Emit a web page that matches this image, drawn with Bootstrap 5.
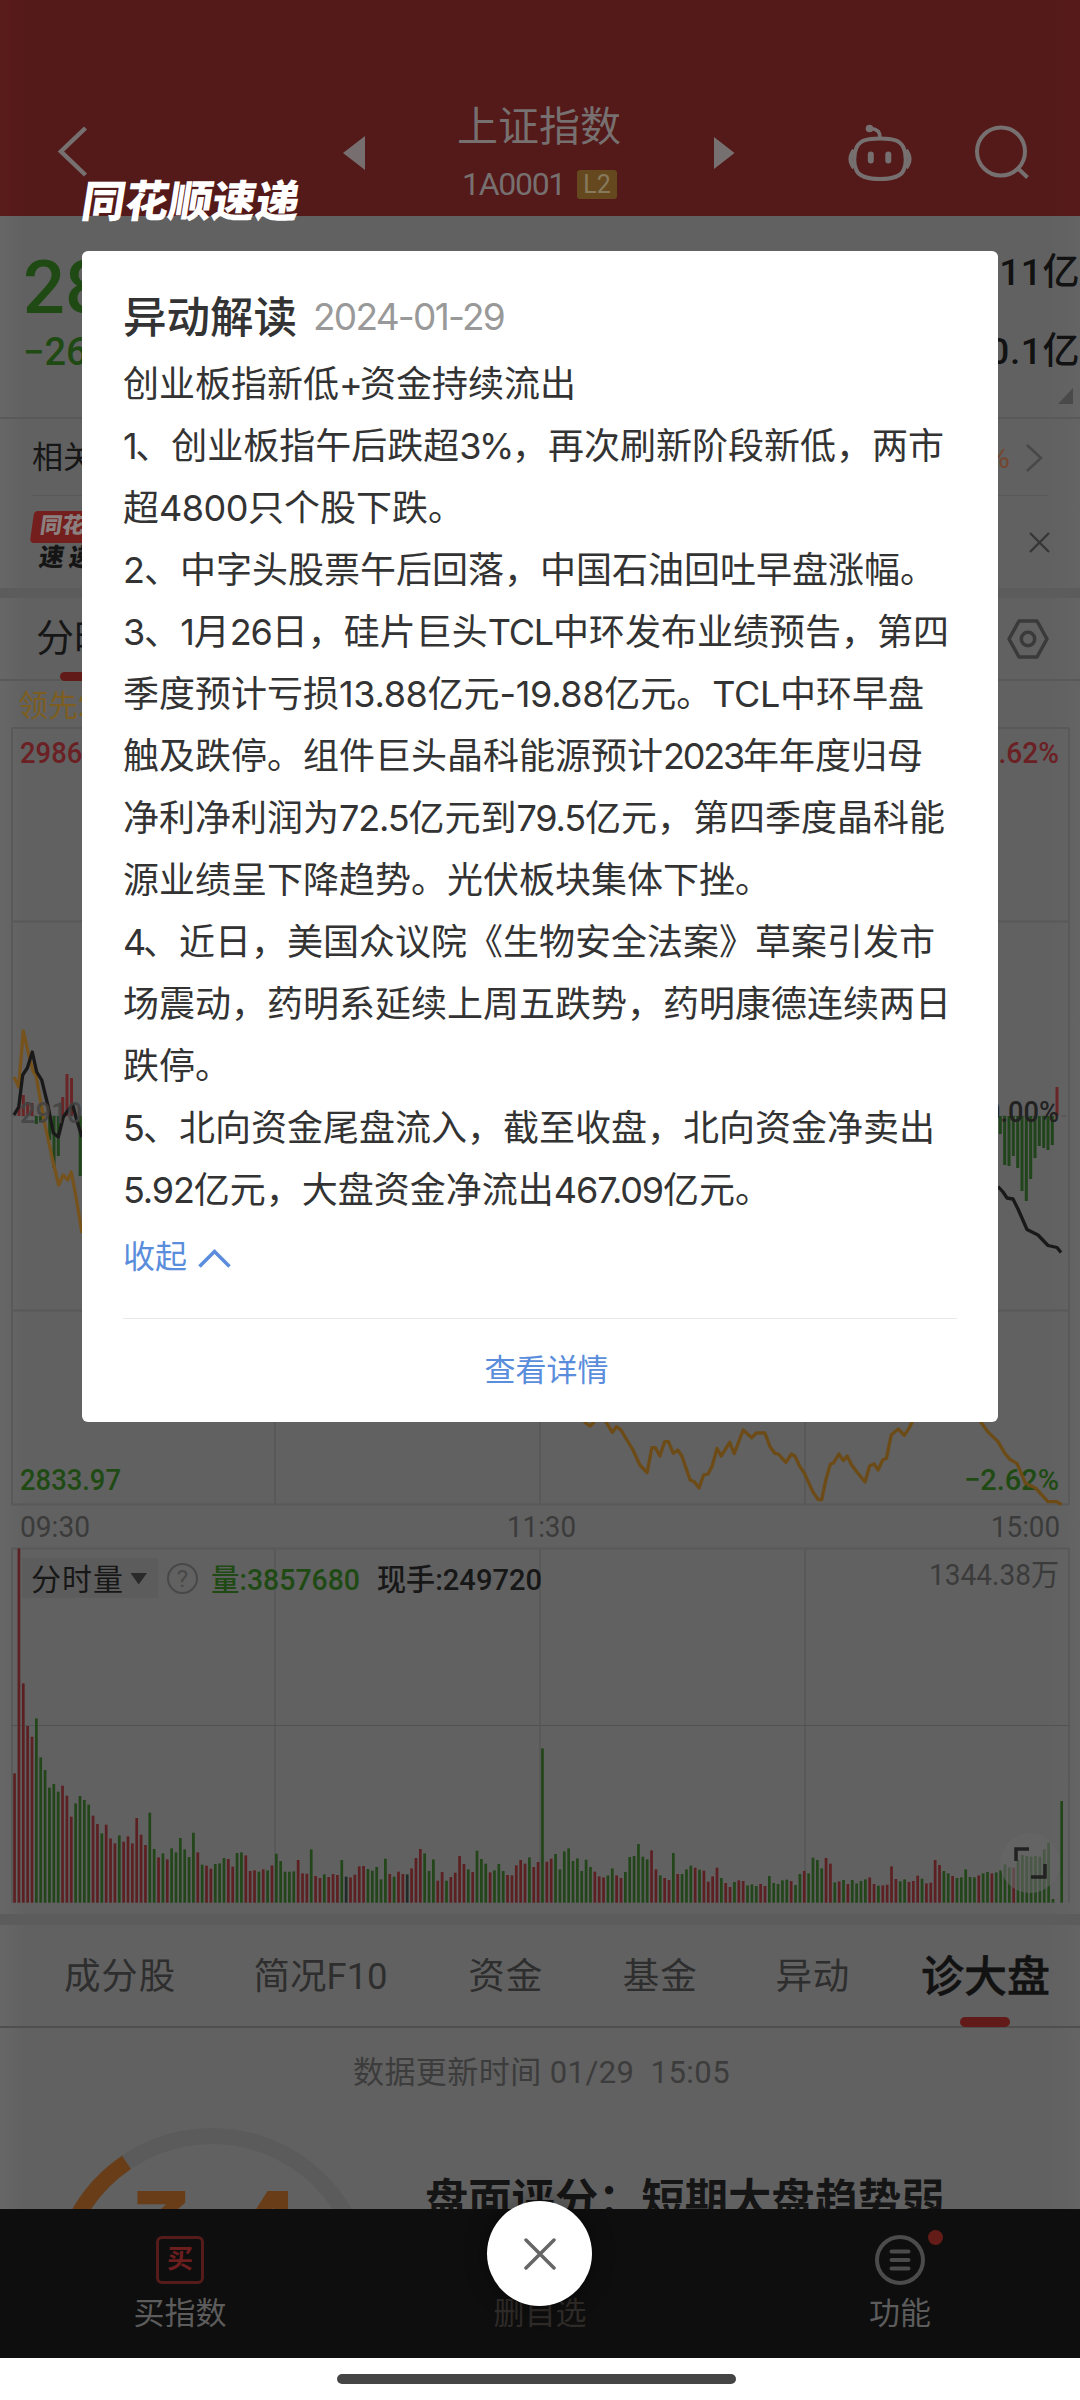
<!DOCTYPE html>
<html lang="zh-CN">
<head>
<meta charset="utf-8">
<meta name="viewport" content="width=device-width, initial-scale=1">
<title>上证指数 1A0001</title>
<link href="https://cdn.jsdelivr.net/npm/bootstrap@5.3.0/dist/css/bootstrap.min.css" rel="stylesheet">
<style>
  body{margin:0;background:#fff;font-family:Roboto,"Noto Sans CJK SC",sans-serif;color:#161616;}
  svg{display:block;flex:none}
  .phone{width:1080px;height:2400px;overflow:hidden;background:linear-gradient(90deg,#676767 0,#616161 24px,#616161 1050px,#646464 1080px)}
  .phone *{white-space:nowrap}
  .topbar{height:216px;padding-top:92px;background:linear-gradient(90deg,#5b1b1b 0,#541919 24px,#541919 1050px,#571a1a 1080px);color:#777070}
  .topbar .titles{width:180px;margin-left:84px}
  .t-name{font-size:41px;line-height:62px;padding:4px 0 0 6px}
  .t-code{font-size:32px;line-height:36px;margin-top:8px;padding-left:11px}
  .l2{background:#66481f;color:#877a5c;font-size:25px;line-height:29px;width:40px;border-radius:3px;text-align:center;margin-left:12px}
  .quote{height:203px;border-bottom:2px solid #595959}
  .green{color:#1f4a14}
  .q-big{font-size:74px;font-weight:500;line-height:74px}
  .q-chg{font-size:38px;font-weight:500;line-height:40px;margin-top:7px}
  .q-side{font-size:37px;font-weight:500;line-height:40px;color:#121212;letter-spacing:.6px}
  .related{height:77px;margin:0 32px;border-bottom:1px solid #595959;font-size:31px;padding-top:2px}
  .news{height:92px;padding:0 30px 0 32px}
  .band{height:10px;background:#5c5c5c}
  .tabs1{height:83px;border-bottom:2px solid #595959;padding:0 31px 0 36px}
  .tab-a{font-size:38px;position:relative}
  .bar-red{position:absolute;height:9px;border-radius:5px;background:#611a17}
  .lead20{height:46px;padding-left:18px;font-size:30px;line-height:50px;color:#7d5e20}
  .tagtop{background:#741f1d;color:#8b8080;font-weight:900;font-size:22px;width:100px;height:32px;line-height:30px;transform:skewX(-8deg);padding-left:8px;border-radius:4px}
  .tagbot{font-weight:900;font-size:25px;line-height:30px;transform:skewX(-8deg);color:#151515;padding-left:7px;letter-spacing:5px}
  .band2{height:11px;background:#5c5c5c}
  .tabs2{height:103px;border-bottom:2px solid #4f4f4f;font-size:36.5px;color:#2e2e2e;padding:3px 30px 0 64px}
  .tabs2 .on{font-size:43px;font-weight:500;color:#121212;position:relative;-webkit-text-stroke:.5px #121212}
  .updated{font-size:31px;height:81px;line-height:90px;color:#3c3c3c;padding-left:353px}
  .score{height:100px;overflow:hidden}
  .score-txt{font-size:43.3px;font-weight:700;line-height:50px;color:#151515;margin-top:67px;margin-left:59px}
  .dock{height:149px;background:#0e0e0e;font-size:31px;color:#5c5c5c}
  .dock .slot{flex:1 1 0}
  .dock-label{line-height:40px}
  .buy{width:48px;height:48px;border:3px solid #551b1b;border-radius:6px;color:#6c1e1e;font-size:26px;font-weight:700;line-height:41px;text-align:center}
  .homebar{height:42px;background:#fff}
  .homebar i{width:399px;height:10px;border-radius:5px;background:#454545;margin:16px 7px 0 0}
  .logo{position:absolute;left:82px;top:176px;color:#fff;font-size:43.5px;font-weight:900;line-height:54px;transform:skewX(-9deg)}
  .sheet{position:absolute;left:82px;top:251px;width:916px;height:1171px;background:#fff;border-radius:6px;padding:36px 41px 0 41px;color:#333;font-family:Inter,"Noto Sans CJK SC",sans-serif}
  .s-title{font-size:43.5px;font-weight:500;line-height:60px}
  .s-date{font-size:37px;color:#999;line-height:60px;margin-left:16px}
  .para{font-size:36px;line-height:62px;height:62px}
  .linkblue{color:#5a8ddb}
  .fold{font-size:32px;line-height:50px;margin-top:11px}
  .rule{height:1px;background:#e8e8e8;margin-top:36px}
  .more{font-size:31px;line-height:50px;margin-top:26px;padding-left:13px}
  .fab{position:absolute;left:487px;top:2201px;width:105px;height:105px;border-radius:50%;background:#fff;box-shadow:0 0 22px rgba(0,0,0,.4)}
</style>
<script src="https://cdn.jsdelivr.net/npm/bootstrap@5.3.0/dist/js/bootstrap.bundle.min.js"></script>
</head>
<body>
<div class="phone position-relative d-flex flex-column">
  <header class="topbar d-flex flex-shrink-0">
    <svg width="367" height="90" viewBox="0 92 367 90"><path d="M85.5 128 61 151.500 85.500 175" fill="none" stroke="#777070" stroke-width="4.500"/><path d="M343 153 365 136V170Z" fill="#776f6f"/></svg>
    <div class="titles">
      <div class="t-name">上证指数</div>
      <div class="t-code d-flex align-items-center"><span data-w="103">1A0001</span><span class="l2 d-inline-block">L2</span></div>
    </div>
    <svg width="449" height="90" viewBox="631 92 449 90" fill="none" stroke="#777070" stroke-width="4">
      <path d="M714 137 734.500 153 714 169Z" fill="#777070" stroke="none"/>
      <path d="M880 138.500c14 0 20 2 23.500 9 3 7 3 17 0 23-3 6-10 8.500-23.500 8.500s-20.500-2.500-23.500-8.500c-3-6-3-16 0-23 3.500-7 9.500-9 23.500-9Z"/>
      <path d="M854 150q-7 9 0 18M906 150q7 9 0 18" stroke-width="4"/>
      <path d="M880 137c0-5-3-8-9-8.500" stroke-width="3.500"/><circle cx="869.500" cy="128.500" r="3.800" fill="#777070" stroke="none"/>
      <path d="M870.800 154.500v6M888.300 154.500v6" stroke-width="6" stroke-linecap="round"/>
      <circle cx="1001" cy="151.500" r="24"/><path d="M1017 167.500 1027.500 177.500"/>
    </svg>
  </header>

  <section class="quote flex-shrink-0 d-flex justify-content-between">
    <div style="padding:35px 0 0 23px"><div class="q-big green">2883.36</div><div class="q-chg green">−26.86</div></div>
    <div class="text-end d-flex flex-column align-items-end" style="padding:37px 0 0 0"><div class="q-side">4311.11亿</div><div class="q-side" style="margin-top:39px">3800.1亿</div>
      <svg width="15" height="16" style="margin:16px 7px 0 0"><path d="M15 0V16H0Z" fill="#4a4a4a"/></svg></div>
  </section>

  <section class="related flex-shrink-0 d-flex align-items-center justify-content-between"><span>相关板块</span><span class="d-flex align-items-center" style="color:#74462f">+0.35%<svg width="17" height="30" style="margin:0 5px 0 16px"><path d="M1 2 15 15 1 28" fill="none" stroke="#484848" stroke-width="2.500"/></svg></span></section>

  <section class="news flex-shrink-0 d-flex align-items-center justify-content-between">
    <div><div class="tagtop">同花顺</div><div class="tagbot">速递</div></div>
    <svg width="21" height="21"><path d="M1 1 20 20M20 1 1 20" stroke="#363636" stroke-width="2.300"/></svg>
  </section>
  <div class="band flex-shrink-0"></div>
  <section class="tabs1 flex-shrink-0 d-flex align-items-center justify-content-between">
    <span class="tab-a">分时<i class="bar-red" style="left:24px;top:62px;width:48px"></i></span>
    <svg width="42" height="40" fill="none" stroke="#3a3a3a" stroke-width="3.500"><path d="M12 2H30L40 20 30 38H12L2 20Z" stroke-linejoin="round"/><circle cx="21" cy="20" r="6.700"/></svg>
  </section>
  <div class="lead20 flex-shrink-0">领先2883.36</div>

  <svg width="1080" height="820" viewBox="0 727 1080 820" font-family="Roboto,'Noto Sans CJK SC',sans-serif" font-size="30">
    <g fill="none" stroke="#595959" stroke-width="2"><path d="M11.500 728H1069M11.500 921.500H1069M11.500 1310.500H1069M11.500 1504.500H1069M12 728V1504.500M275 728V1504.500M540 728V1504.500M805 728V1504.500M1069 728V1504.500"/><path d="M11.500 1116H1069" stroke-dasharray="5 5"/></g>
    <g stroke-width="3">
      <path stroke="#6a2527" d="M19 1116V1107M23.300 1116V1095M27.700 1116V1102M32 1116V1103M62.700 1116V1097M67 1116V1074M71.500 1116V1078M1057 1116V1087"/>
      <path stroke="#20451a" d="M36.300 1116v8M40.500 1116v6M49.700 1116v24M54 1116v52M58.300 1116v40M80.200 1116v60M1000.300 1116v18M1004.700 1116v49M1009 1116v50M1013.300 1116v40M1017.700 1116v52M1022 1116v75M1026.300 1116v85M1030.700 1116v63M1035 1116v42M1039.300 1116v30M1043.700 1116v32M1048 1116v34M1052.300 1116v29"/>
    </g>
    <g font-weight="500">
      <text x="20" y="763" fill="#6b2024" textLength="101" lengthAdjust="spacingAndGlyphs">2986.47</text>
      <text x="1059" y="763" fill="#6b2024" text-anchor="end" textLength="92" lengthAdjust="spacingAndGlyphs">+2.62%</text>
      <text x="20" y="1490" fill="#1f4a14" textLength="101" lengthAdjust="spacingAndGlyphs">2833.97</text>
      <text x="1059" y="1490" fill="#1f4a14" text-anchor="end" textLength="95" lengthAdjust="spacingAndGlyphs">−2.62%</text>
    </g>
    <g fill="none" stroke-linejoin="round" stroke-width="3.300">
      <path stroke="#76521c" d="M14 1077 18.700 1087 23.300 1031 28.300 1053 33.300 1072 36 1075 43.300 1117 53.300 1163 58.700 1185 63.300 1175 67.700 1180 71.300 1172 76 1197 82 1233"/>
      <path stroke="#191919" d="M14 1115 18.700 1107 22.700 1075 27.300 1068 32.300 1052 36.700 1072 41.700 1080 48.300 1107 53.300 1133 58.300 1137 63.300 1117 68.300 1110 72.700 1105 76.700 1120 82 1137M998 1186.500 1003 1192 1007 1198 1013 1199 1018 1209 1027 1229.500 1038 1235 1048 1245.500 1057 1247.500 1061 1252.500"/>
      <path transform="translate(540 1410) scale(.34435 .33333)" vector-effect="non-scaling-stroke" stroke="#6c4b17" d="M128 36 145 48 158 36M190 33 210 67 222 50 235 60 270 120 290 165 311 188 325 113 335 113 348 138 362 95 373 95 387 130 400 120 412 138 436 210 448 215 462 234 475 195 488 192 500 168 514 115 526 138 551 97 564 131 590 60 615 83 628 69 653 69 668 110 682 130 692 132 714 157 730 132 740 138 755 170 768 190 792 245 808 269 818 269 830 210 843 163 853 158 868 132 881 152 892 138 905 165 920 185 944 216 957 168 970 162 982 180 995 150 1006 145 1020 75 1040 57 1058 76 1071 56 1082 33M1278 33 1300 65 1330 95 1350 130 1365 148 1385 160 1410 220 1440 235 1475 275 1500 275 1515 284"/>
    </g>
    <g font-weight="500">
      <text x="20" y="1123" fill="#434343" fill-opacity=".85" textLength="101" lengthAdjust="spacingAndGlyphs">2910.22</text>
      <text x="1059" y="1122" fill="#222" text-anchor="end" textLength="74" lengthAdjust="spacingAndGlyphs">0.00%</text>
    </g>
    <g fill="#3b3b3b"><text x="20" y="1537" textLength="70" lengthAdjust="spacingAndGlyphs">09:30</text><text x="507" y="1537" textLength="69" lengthAdjust="spacingAndGlyphs">11:30</text><text x="991" y="1537" textLength="69" lengthAdjust="spacingAndGlyphs">15:00</text></g>
  </svg>

  <svg id="volume" width="1080" height="367" viewBox="0 1547 1080 367" font-family="Roboto,'Noto Sans CJK SC',sans-serif" font-size="30">
    <path fill="none" stroke="#595959" stroke-width="2" d="M11.500 1548.500H1069M12 1548V1903M275 1548V1903M540 1548V1903M805 1548V1903M1069 1548V1903"/><path d="M11.500 1725.500H1069" stroke="#525252"/>
    <rect x="22" y="1558" width="136" height="40" fill="#5c5c5c"/>
    <text x="31" y="1590" fill="#171717" textLength="92">分时量</text><path d="M130.500 1573H147L138.700 1584.500Z" fill="#2a2a2a"/>
    <circle cx="182.500" cy="1578.500" r="14.500" fill="none" stroke="#484848" stroke-width="2"/><text x="182.500" y="1587" font-size="24" text-anchor="middle" fill="#484848">?</text>
    <g font-weight="500"><text x="211" y="1589.500" fill="#1f4a14" textLength="149" lengthAdjust="spacingAndGlyphs">量:3857680</text><text x="377" y="1589.500" fill="#171717" textLength="165" lengthAdjust="spacingAndGlyphs">现手:249720</text></g>
    <text x="929" y="1585" fill="#3b3b3b" textLength="130" lengthAdjust="spacingAndGlyphs">1344.38万</text>
    <g id="bars"></g>
    <circle cx="1030" cy="1863" r="30" fill="#666" fill-opacity=".6"/>
    <path d="M1016 1861V1849H1029M1045 1864V1877H1031" fill="none" stroke="#222" stroke-width="3.500"/>
  </svg>

  <div class="band2 flex-shrink-0"></div>
  <nav class="tabs2 flex-shrink-0 d-flex align-items-center justify-content-between"><span data-w="112">成分股</span><span data-w="134">简况F10</span><span data-w="75" style="margin-left:3px">资金</span><span data-w="75" style="margin-left:2px">基金</span><span data-w="75">异动</span><span class="on" data-w="129" style="margin-left:-7px">诊大盘<i class="bar-red" style="left:39px;top:72px;width:50px;height:10px"></i></span></nav>
  <div class="updated flex-shrink-0"><span data-w="377" style="white-space:pre">数据更新时间 01/29  15:05</span></div>
  <section class="score flex-shrink-0 d-flex">
    <svg width="366" height="100" viewBox="0 2109 366 100"><circle cx="212" cy="2289" r="153" fill="none" stroke="#5b5b5b" stroke-width="16"/><path d="M59 2289A153 153 0 0 1 126.500 2162.300" fill="none" stroke="#683d18" stroke-width="16"/><text x="130" y="2259" fill="#683d18" font-family="Inter,sans-serif" font-weight="800" font-size="94" textLength="170" style="font-feature-settings:'cv09'">3.4</text></svg>
    <div class="score-txt">盘面评分：短期大盘趋势弱</div>
  </section>

  <nav class="dock flex-shrink-0 d-flex text-center">
    <div class="slot d-flex flex-column align-items-center" style="padding-top:27px"><div class="buy">买</div><div class="dock-label" style="margin-top:10px">买指数</div></div>
    <div class="slot dock-label" style="padding-top:85px;color:#2f2b28">删自选</div>
    <div class="slot d-flex flex-column align-items-center" style="padding-top:19px"><svg width="86" height="60" viewBox="857 2228 86 60" fill="none" stroke="#4b4b4b" stroke-width="4"><circle cx="900" cy="2260" r="23"/><path d="M891.500 2251.500h17M891.500 2260h17M891.500 2268.500h17" stroke-linecap="round"/><circle cx="935.500" cy="2237.500" r="7.500" fill="#641c18" stroke="none"/></svg><div class="dock-label" style="margin-top:6px">功能</div></div>
  </nav>
  <div class="homebar flex-shrink-0 d-flex justify-content-center"><i></i></div>

  <div class="logo">同花顺速递</div>
  <main class="sheet">
    <div class="d-flex"><span class="s-title">异动解读</span><span class="s-date" data-w="191">2024-01-29</span></div>
    <div style="padding-top:6px">
      <div class="para"><span data-w="453">创业板指新低+资金持续流出</span></div>
      <div class="para"><span data-w="821">1、创业板指午后跌超3%，再次刷新阶段新低，两市</span></div>
      <div class="para"><span data-w="341">超4800只个股下跌。</span></div>
      <div class="para"><span data-w="813">2、中字头股票午后回落，中国石油回吐早盘涨幅。</span></div>
      <div class="para"><span data-w="826">3、1月26日，硅片巨头TCL中环发布业绩预告，第四</span></div>
      <div class="para"><span data-w="801">季度预计亏损13.88亿元-19.88亿元。TCL中环早盘</span></div>
      <div class="para"><span data-w="800">触及跌停。组件巨头晶科能源预计2023年年度归母</span></div>
      <div class="para"><span data-w="822">净利净利润为72.5亿元到79.5亿元，第四季度晶科能</span></div>
      <div class="para"><span>源业绩呈下降趋势。光伏板块集体下挫。</span></div>
      <div class="para"><span data-w="812">4、近日，美国众议院《生物安全法案》草案引发市</span></div>
      <div class="para"><span>场震动，药明系延续上周五跌势，药明康德连续两日</span></div>
      <div class="para"><span>跌停。</span></div>
      <div class="para"><span data-w="812">5、北向资金尾盘流入，截至收盘，北向资金净卖出</span></div>
      <div class="para"><span data-w="648">5.92亿元，大盘资金净流出467.09亿元。</span></div>
    </div>
    <div class="linkblue fold d-flex align-items-center">收起<svg width="33" height="19" style="margin:3px 0 0 11px"><path d="M1.500 17.500 16.500 2.500 31.500 17.500" fill="none" stroke="#5a8ddb" stroke-width="3.500"/></svg></div>
    <div class="rule"></div>
    <div class="linkblue more text-center">查看详情</div>
  </main>
  <button class="fab border-0 p-0 d-flex align-items-center justify-content-center"><svg width="32" height="32"><path d="M2 2 30 30M30 2 2 30" stroke="#666" stroke-width="3.500" stroke-linecap="round"/></svg></button>
</div>
<script>
// Per-minute volume: direction letter + level of the bar top (thirds of a px, baseline 1478)
const vol = `R1090 R415 R820 R948 R980 G925 G1042 G1080 G1133 G1122 G1145 R1127 R1157 R1220 G1180 G1158 G1170 G1184 R1217 R1242 G1270 R1244 R1285 R1300 G1276 R1295 R1279 R1300 R1224 R1274 R1305 G1208 G1317 R1342 G1330 R1348 G1315 G1327 G1284 G1318 G1341 G1268 R1327 G1364 R1367 R1376 G1362 G1360 G1344 R1347 R1370 G1329 G1327 R1336 R1383 R1381 G1385 R1378 G1381 R1366 G1331 G1353 G1385 G1385 G1384 R1350 R1390 R1391 G1318 R1398 R1404 G1393 R1401 R1392 R1395 G1350 K1400 R1402 R1394 R1369 R1368 G1377 G1382 G1371 G1408 G1346 R1392 G1400 R1385 R1392 K1393 R1375 R1344 R1317 G1330 G1383 G1348 R1412 R1386 G1412 R1401 R1388 R1338 R1362 G1378 R1386 G1322 G1347 G1361 R1387 G1381 G1362 G1383 R1395 R1396 R1366 R1350 R1361 G1342 R1371 R1356
G1015 R1355 R1346 G1332 G1378 G1324 G1315 G1353 G1345 G1383 G1349 G1371 R1385 R1399 R1402 G1396 G1375 R1396 R1404 G1386 G1341 G1338 G1302 G1340 G1348 R1321 R1378 G1396 R1404 R1410 G1329 R1392 G1392 G1378 G1367 R1373 G1379 R1382 R1415 R1399 R1373 G1404 R1419 R1431 G1416 R1411 R1413 G1426 G1423 G1428 R1422 R1428 G1398 G1419 G1422 G1411 G1409 R1413 G1425 G1392 R1383 G1390 G1343 G1350 G1375 R1344 R1361 G1417 R1414 G1410 R1422 G1410 G1420 G1413 G1408 R1402 R1422 G1427 R1426 R1424 R1369 R1407 G1414 G1408 R1416 R1413 R1397 G1406 R1420 R1418 R1350 R1365 G1383 G1390 R1398 G1404 G1402 G1378 G1401 G1402 R1396 G1390 G1386 R1390 G1387 G1381 G1363 G1372 R1373 G1350 G1335 G1338 G1340 G1338 G1340 G1318 G1298 G1467 G1478 G1173`.split(/\s+/);
const tint = {R:'#5d2022', G:'#224619', K:'#202a26'};
document.getElementById('bars').innerHTML = vol.map((v,i)=>{
  const h=(1478-v.slice(1))/3;
  return `<rect x="${(13.2+i*4.363).toFixed(2)}" y="${(1902.7-h).toFixed(1)}" width="2.7" height="${h.toFixed(1)}" fill="${tint[v[0]]}"/>`;
}).join('');
// Spread the latin runs (or the whole label when there are none) so each line takes its set width
document.querySelectorAll('[data-w]').forEach(el=>{
  el.style.display='inline-block';
  const t=el.firstChild, s=t.textContent, re=/[0-9A-Za-z.%+\-]+/g;
  const runs=el.closest('.para')?s.match(re):null;
  const gap=+el.dataset.w-el.getBoundingClientRect().width;
  if(runs){
    const ls=gap/runs.join('').length;
    el.innerHTML=s.replace(re,m=>`<span style="letter-spacing:${ls.toFixed(3)}px">${m}</span>`);
  }else el.style.letterSpacing=(gap/s.length).toFixed(3)+'px';
});
</script>
</body>
</html>
